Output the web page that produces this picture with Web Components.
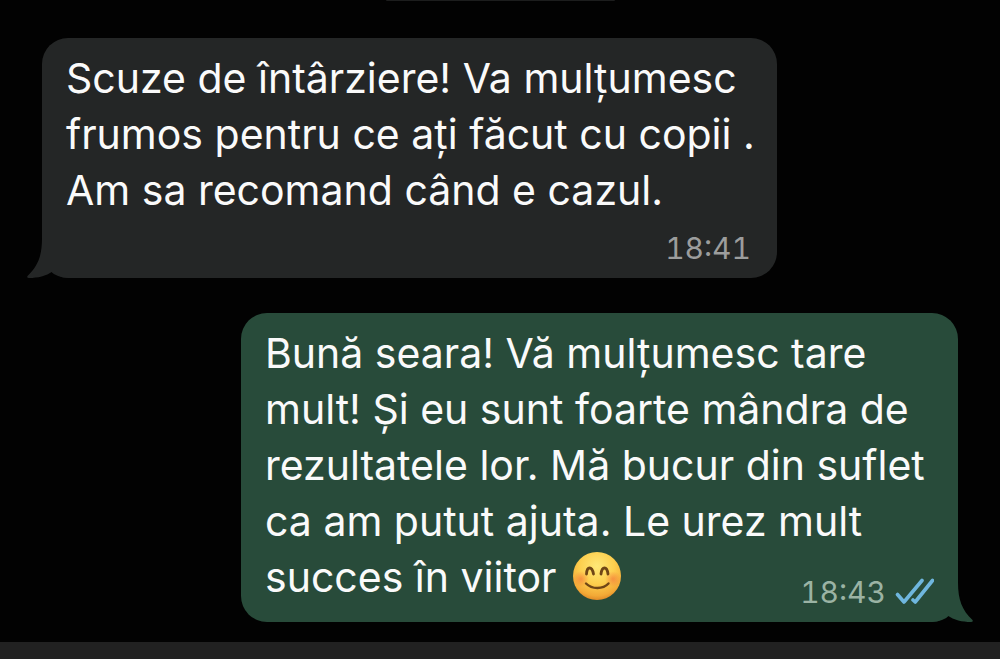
<!DOCTYPE html>
<html lang="ro">
<head>
<meta charset="utf-8">
<meta name="viewport" content="width=device-width, initial-scale=1">
<title>Conversație</title>
<style>
  body { margin: 0; background: #020202; font-family: Inter, "Liberation Sans", sans-serif; }
</style>
</head>
<body>
<chat-thread>
  <date-pill slot="day"></date-pill>
  <chat-bubble side="in" time="18:41">Scuze de întârziere! Va mulțumesc<br>frumos pentru ce ați făcut cu copii .<br>Am sa recomand când e cazul.</chat-bubble>
  <chat-bubble side="out" time="18:43" read>Bună seara! Vă mulțumesc tare<br>mult! Și eu sunt foarte mândra de<br>rezultatele lor. Mă bucur din suflet<br>ca am putut ajuta. Le urez mult<br>succes în viitor <smile-emoji></smile-emoji></chat-bubble>
  <composer-bar slot="composer"></composer-bar>
</chat-thread>
<script>
class Base extends HTMLElement {
  connectedCallback() {
    if (!this.shadowRoot) this.attachShadow({ mode: "open" }).innerHTML = this.render();
  }
}

customElements.define("chat-thread", class extends Base {
  render() {
    return `<style>
      :host { display: flex; flex-direction: column; min-height: 100vh; }
      main { display: flex; flex-direction: column; gap: 35px; padding: 0 42px 20px; }
      .day { display: flex; justify-content: center; margin-bottom: 2px; }
      footer { flex: 1; display: flex; }
    </style>
    <main><div class="day"><slot name="day"></slot></div><slot></slot></main>
    <footer><slot name="composer"></slot></footer>`;
  }
});

customElements.define("date-pill", class extends Base {
  render() {
    return `<style>
      :host { display: block; width: 25%; height: 1px; background: #1c1d1d; border-radius: 0 0 8px 8px; }
    </style>`;
  }
});

customElements.define("composer-bar", class extends Base {
  render() {
    return `<style>:host { display: block; flex: 1; min-height: 16px; background: #212121; }</style>`;
  }
});

customElements.define("chat-bubble", class extends Base {
  render() {
    const ticks = this.hasAttribute("read") ? `<svg class="ticks" viewBox="0 0 40 28" role="img" aria-label="Citit">
      <g fill="none" stroke="#6fb6de" stroke-width="3.600" stroke-linecap="round" stroke-linejoin="round">
        <path d="M3.500 16.500 10 24 28 2.500"/><path d="M19 22 21.200 24 38.500 2.500"/></g></svg>` : "";
    return `<style>
      :host { display: grid; grid-template-columns: minmax(0, 1fr); position: relative;
        box-sizing: border-box; max-width: 100%; border-radius: 26px;
        background: var(--fill); color: #fafafa; font-size: 41px; line-height: 56px; }
      :host([side="in"]) { --fill: #242626; --meta: #9c9d9d; align-self: flex-start; width: 735px;
        padding: 12px 26px 12px 24px; row-gap: 12px; }
      :host([side="out"]) { --fill: #284b3a; --meta: #9bb3a4; align-self: flex-end; width: 717px;
        padding: 12px 24px; }
      p { margin: 0; white-space: nowrap; }
      :host([side="out"]) p, :host([side="out"]) .meta { grid-area: 1 / 1; }
      :host([side="out"]) p { padding-bottom: 5px; }
      p, .meta { position: relative; }
      .meta { display: flex; align-items: center; gap: 8px; align-self: end; justify-self: end;
        color: var(--meta); font-size: 30px; line-height: 36px; font-variant-numeric: tabular-nums; }
      .ticks { width: 40px; height: 28px; }
      .tail { position: absolute; bottom: 0; width: 44px; height: 40px; fill: var(--fill); }
      :host([side="in"]) .tail { left: -15px; }
      :host([side="out"]) .tail { right: -15px; transform: scaleX(-1); }
    </style>
    <svg class="tail" viewBox="0 0 44 40" aria-hidden="true">
      <path d="M15 0C15 18 11 28 .5 38Q-.5 40 2 40C11 40 19 38 25.500 33.500C31 38 36 40 44 40V0Z"/>
    </svg>
    <p><slot></slot></p>
    <div class="meta"><time>${this.getAttribute("time")}</time>${ticks}</div>`;
  }
});

customElements.define("smile-emoji", class extends Base {
  render() {
    return `<style>
      :host { display: inline-block; height: 50px; margin-left: 4px; vertical-align: -9px; line-height: 0; }
      svg { width: 50px; height: 50px; }
    </style>
    <svg viewBox="0 0 50 50" role="img" aria-label="😊">
      <defs>
        <radialGradient id="face" cx=".5" cy=".3" r=".72">
          <stop offset="0" stop-color="#ffe878"/><stop offset=".5" stop-color="#fdcf4e"/>
          <stop offset=".85" stop-color="#f3a936"/><stop offset="1" stop-color="#dd8424"/>
        </radialGradient>
        <radialGradient id="blush"><stop offset="0" stop-color="#f4703a" stop-opacity=".6"/>
          <stop offset="1" stop-color="#f4703a" stop-opacity="0"/></radialGradient>
      </defs>
      <circle cx="25" cy="25" r="24" fill="url(#face)"/>
      <circle cx="9" cy="28" r="8" fill="url(#blush)"/><circle cx="41" cy="28" r="8" fill="url(#blush)"/>
      <g fill="none" stroke="#704616" stroke-linecap="round">
        <path stroke-width="2.800" d="M14.500 23C15 15 20 15 21.500 23M29 23C30 15 35 15 36 23"/>
        <path stroke-width="2.400" d="M14 32.500C20 38.500 31 38.500 36.500 32.500"/>
      </g>
    </svg>`;
  }
});
</script>
</body>
</html>
